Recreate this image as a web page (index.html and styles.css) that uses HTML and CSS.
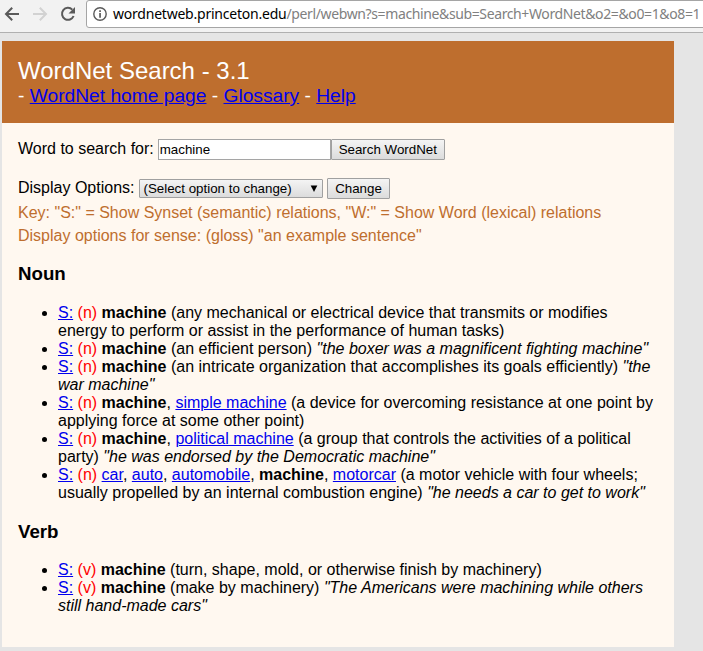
FILE: index.html
```html
<!DOCTYPE html>
<html lang="en">
<head>
<meta charset="utf-8">
<title>WordNet Search - 3.1</title>
<link rel="stylesheet" href="styles.css">
</head>
<body>
<div class="toolbar">
  <svg class="nav" width="86" height="28" viewBox="0 0 86 28" fill="none" stroke-width="2">
    <path d="M19 14H6.500M12.200 7.700L6 14l6.200 6.300" stroke="#5a5a5a"/>
    <path d="M33 14h12.500M39.800 7.700L46 14l-6.200 6.300" stroke="#d2d2d2"/>
    <path d="M72.300 9.600A6 6 0 1 0 73.600 16" stroke="#5a5a5a"/>
    <path d="M75 7v6.500h-6.500z" fill="#5a5a5a"/>
  </svg>
  <div class="address">
    <svg class="info" width="14" height="14" viewBox="0 0 14 14">
      <circle cx="7" cy="7" r="6.200" fill="none" stroke="#5a5a5a" stroke-width="1.400"/>
      <path d="M6.200 3.300h1.700v1.700H6.200zM6.200 6.100h1.700v4.600H6.200z" fill="#5a5a5a"/>
    </svg>
    <span class="host">wordnetweb.princeton.edu</span><span class="path">/perl/webwn?s=machine&amp;sub=Search+WordNet&amp;o2=&amp;o0=1&amp;o8=1</span>
  </div>
</div>
<main class="page">
  <header class="banner">
    <div class="title">WordNet Search - 3.1</div>
    <div class="links">- <a href="#">WordNet home page</a> - <a href="#">Glossary</a> - <a href="#">Help</a></div>
  </header>
  <div class="content">
    <form>
      <div class="row search"><label for="q">Word to search for:</label><input id="q" class="query" value="machine"><button type="button" class="go">Search WordNet</button></div>
      <div class="row options"><span class="label">Display Options:</span><div class="select"><span>(Select option to change)</span><svg width="8" height="8" viewBox="0 0 8 8"><path d="M.7.500h6.600L4 7z"/></svg></div><button type="button" class="change">Change</button></div>
    </form>
    <div class="key">Key: "S:" = Show Synset (semantic) relations, "W:" = Show Word (lexical) relations<br>Display options for sense: (gloss) "an example sentence"</div>
    <h3>Noun</h3>
    <ul>
      <li><a href="#">S:</a> <span class="pos">(n)</span> <b>machine</b> (any mechanical or electrical device that transmits or modifies<br>energy to perform or assist in the performance of human tasks)</li>
      <li><a href="#">S:</a> <span class="pos">(n)</span> <b>machine</b> (an efficient person) <i>"the boxer was a magnificent fighting machine"</i></li>
      <li><a href="#">S:</a> <span class="pos">(n)</span> <b>machine</b> (an intricate organization that accomplishes its goals efficiently) <i>"the<br>war machine"</i></li>
      <li><a href="#">S:</a> <span class="pos">(n)</span> <b>machine</b>, <a href="#">simple machine</a> (a device for overcoming resistance at one point by<br>applying force at some other point)</li>
      <li><a href="#">S:</a> <span class="pos">(n)</span> <b>machine</b>, <a href="#">political machine</a> (a group that controls the activities of a political<br>party) <i>"he was endorsed by the Democratic machine"</i></li>
      <li><a href="#">S:</a> <span class="pos">(n)</span> <a href="#">car</a>, <a href="#">auto</a>, <a href="#">automobile</a>, <b>machine</b>, <a href="#">motorcar</a> (a motor vehicle with four wheels;<br>usually propelled by an internal combustion engine) <i>"he needs a car to get to work"</i></li>
    </ul>
    <h3>Verb</h3>
    <ul>
      <li><a href="#">S:</a> <span class="pos">(v)</span> <b>machine</b> (turn, shape, mold, or otherwise finish by machinery)</li>
      <li><a href="#">S:</a> <span class="pos">(v)</span> <b>machine</b> (make by machinery) <i>"The Americans were machining while others<br>still hand-made cars"</i></li>
    </ul>
  </div>
</main>
</body>
</html>
```
FILE: styles.css
```css
* { box-sizing: border-box; }
body {
  margin: 0;
  height: 651px;
  overflow: hidden;
  background: #e5e5e5;
  color: #000;
  font: 16px/18px "Liberation Sans", Arial, sans-serif;
}
a { color: #0000ee; text-decoration: underline; }
.toolbar {
  display: flex;
  align-items: flex-start;
  height: 33px;
  background: #f2f2f2;
  border-bottom: 1px solid #b0b0b0;
}
.nav { flex: none; }
.address {
  display: flex;
  align-items: center;
  flex: none;
  width: 640px;
  height: 28px;
  padding-left: 6px;
  background: #fff;
  border: 1px solid #a5a5a5;
  border-radius: 3px;
  font: 14px/26px "Noto Sans", sans-serif;
  white-space: nowrap;
}
.info { flex: none; margin-right: 6px; }
.host { letter-spacing: -0.22px; }
.path { color: #808080; letter-spacing: -0.38px; }
.page { width: 672px; margin: 8px 0 0 2px; background: #fff8f0; }
.banner { height: 82px; padding: 16px; background: #be6e2e; color: #fff; }
.title { font-size: 24px; line-height: 28px; }
.links { font-size: 19.2px; line-height: 22px; }
.content { height: 524px; padding: 16px 16px 0; }
.row { display: flex; white-space: nowrap; }
.search { height: 39px; align-items: flex-start; line-height: 20px; }
.query {
  width: 173px;
  height: 21px;
  margin-left: 4px;
  padding: 1px;
  border: 1px solid #a5a5a5;
  background: #fff;
  font: 13.333px "Liberation Sans", Arial, sans-serif;
}
button {
  height: 21px;
  padding: 0;
  border: 1px solid #a0a0a0;
  border-radius: 1px;
  background: linear-gradient(#f4f4f4, #dcdcdc);
  color: #000;
  font: 13.333px "Liberation Sans", Arial, sans-serif;
}
.go { width: 114px; }
.options { height: 21px; align-items: center; line-height: 18px; }
.label { padding-bottom: 2px; }
.select {
  display: flex;
  align-items: center;
  justify-content: space-between;
  width: 184px;
  height: 19px;
  margin: 0 4px;
  padding: 0 4px;
  border: 1px solid #a0a0a0;
  border-radius: 1px;
  background: linear-gradient(#f4f4f4, #dcdcdc);
  font-size: 13.333px;
}
.change { width: 63px; padding-left: 1px; }
.key { margin-top: 2px; color: #be6e2e; line-height: 23px; white-space: nowrap; }
h3 { margin: 16px 0 20px; font-size: 18.72px; line-height: 21px; }
ul { margin: 0; padding-left: 40px; white-space: nowrap; }
ul + h3 { margin: 19px 0; }
.pos { color: #f00; }
```
